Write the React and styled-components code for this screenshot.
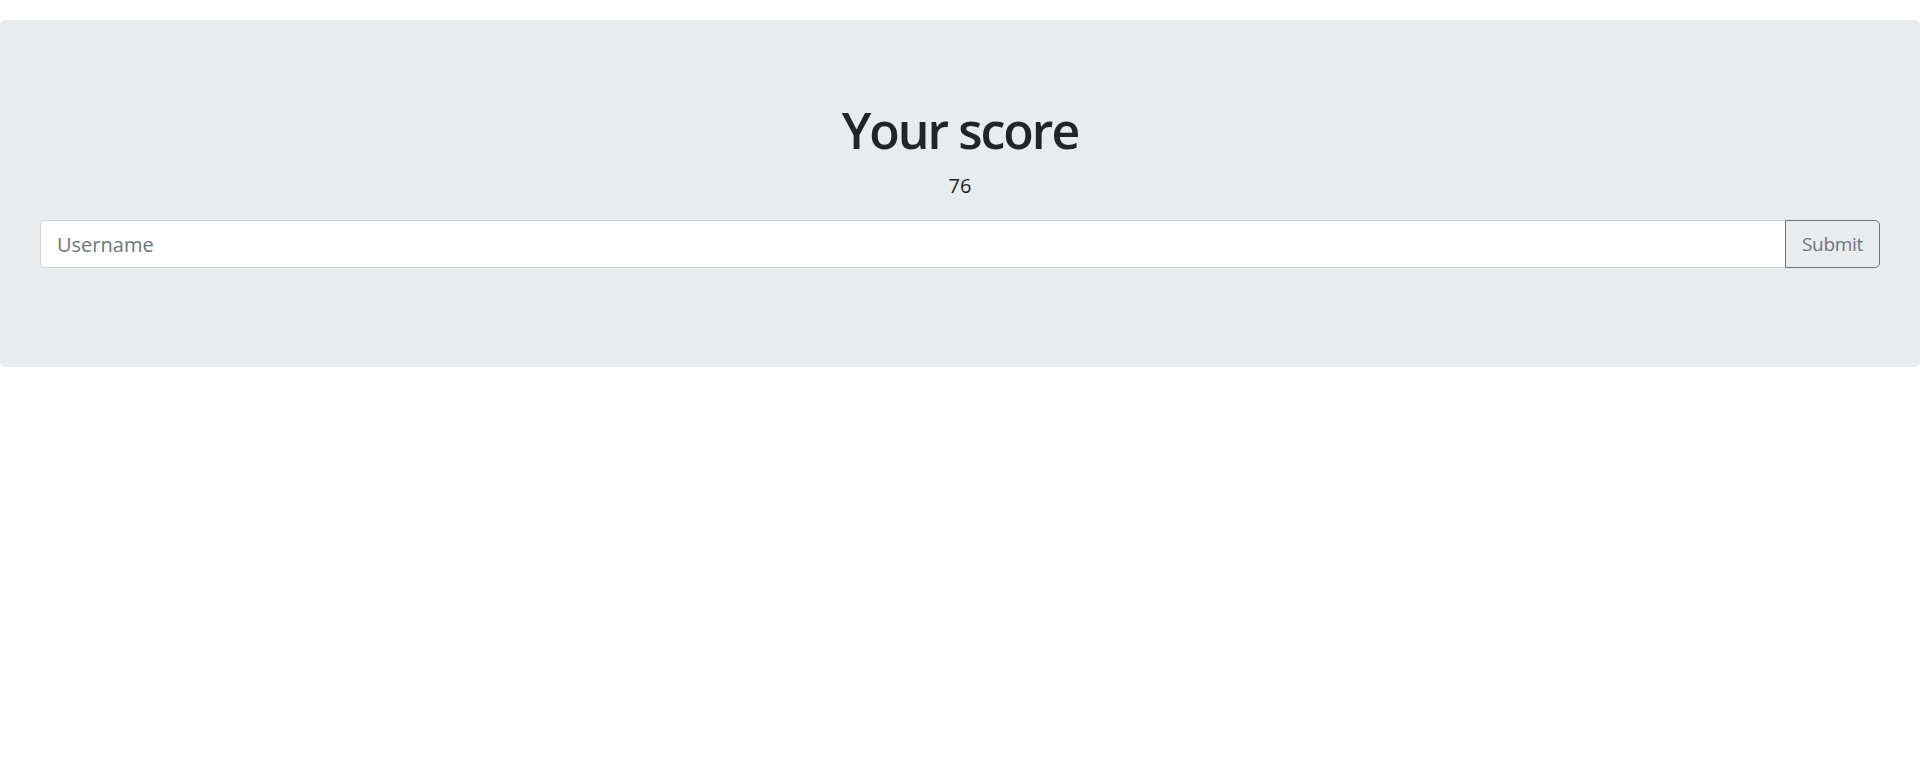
import React from 'react';
import styled, { createGlobalStyle } from 'styled-components';

const GlobalStyle = createGlobalStyle`
  body {
    margin: 0;
    background: #fff;
    color: #212529;
    font-family: "Open Sans", "Noto Sans", sans-serif;
  }
`;

const Page = styled.div`
  padding-top: 20px;
`;

const Jumbotron = styled.section`
  background: #e9ecef;
  border-radius: 5px;
  padding: 80px 40px 99px;
  text-align: center;
`;

const Title = styled.h1`
  margin: 0 0 10px;
  font-size: 50px;
  font-weight: 600;
  letter-spacing: -2px;
  line-height: 1.2;
  color: #212529;
`;

const Score = styled.p`
  margin: 0 0 20px;
  padding-top: 1px;
  font-size: 20px;
  line-height: 1.5;
  color: #212529;
`;

const InputGroup = styled.form`
  display: flex;
  align-items: stretch;
  margin-top: -1px;
  text-align: left;
`;

const Input = styled.input`
  flex: 1;
  min-width: 0;
  height: 48px;
  box-sizing: border-box;
  padding: 8px 16px;
  font-family: inherit;
  font-size: 20px;
  color: #495057;
  background: #fff;
  border: 1px solid #ced4da;
  border-right: none;
  border-radius: 5px 0 0 5px;
  outline: none;

  &::placeholder {
    color: #6c757d;
  }
`;

const Button = styled.button`
  height: 48px;
  box-sizing: border-box;
  padding: 8px 16px;
  font-family: inherit;
  font-size: 19px;
  letter-spacing: -0.3px;
  color: #6c757d;
  background: transparent;
  border: 1px solid #6c757d;
  border-radius: 0 5px 5px 0;
  cursor: pointer;
`;

export default function App() {
  return (
    <Page>
      <GlobalStyle />
      <Jumbotron>
        <Title>Your score</Title>
        <Score>76</Score>
        <InputGroup onSubmit={e => e.preventDefault()}>
          <Input type="text" placeholder="Username" />
          <Button type="submit">Submit</Button>
        </InputGroup>
      </Jumbotron>
    </Page>
  );
}
